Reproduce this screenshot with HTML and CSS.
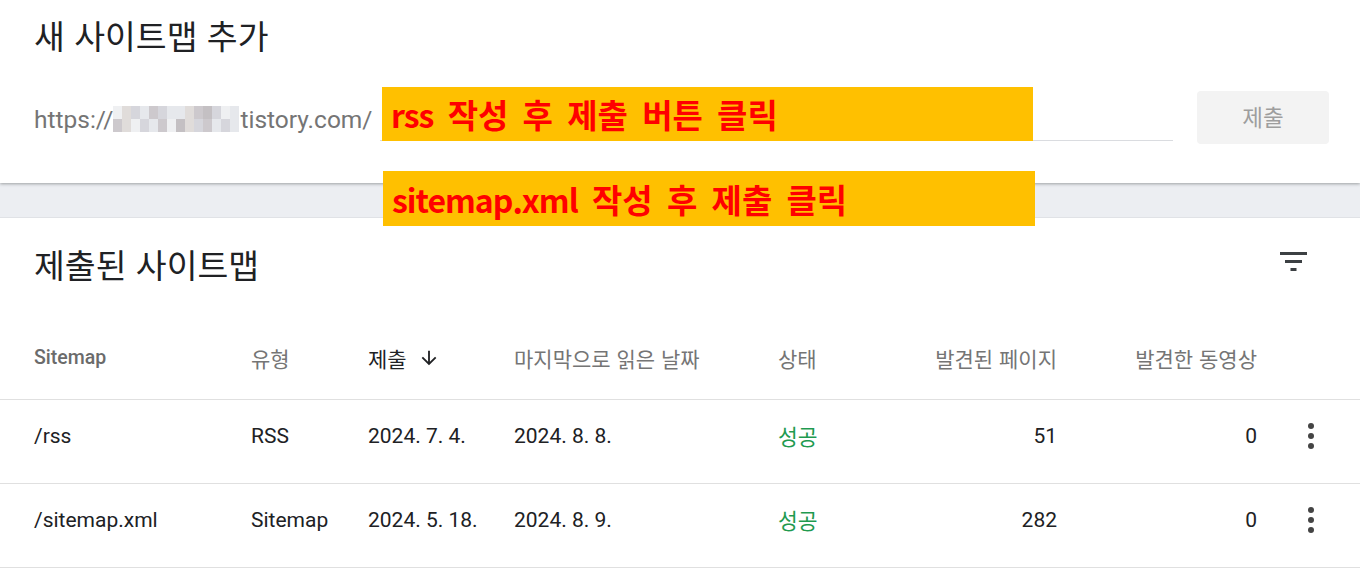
FILE: index.html
```html
<!DOCTYPE html>
<html lang="ko">
<head>
    <meta charset="UTF-8">
    <title>사이트맵</title>
    <link rel="stylesheet" href="styles.css">
</head>
<body>
<div class="page">
    <section class="card add-card">
        <h2 class="card-title">새 사이트맵 추가</h2>
        <div class="url-row">
            <span class="url-prefix">https://<span class="blur"><i></i><i></i><i></i><i></i><i></i><i></i><i></i><i></i><i></i><i></i><i></i><i></i><i></i><i></i><i></i><i></i><i></i><i></i><i></i><i></i><i></i><i></i><i></i><i></i><i></i><i></i><i></i><i></i></span>tistory.com/</span>
            <div class="url-input"></div>
            <button class="submit-btn">제출</button>
        </div>
    </section>

    <div class="band"></div>

    <section class="card list-card">
        <div class="list-head">
            <h2 class="card-title">제출된 사이트맵</h2>
            <svg class="filter-icon" width="28" height="20" viewBox="0 0 28 20">
                <rect x="0" y="0" width="27" height="3" fill="#3c4043"/>
                <rect x="5" y="8" width="17" height="3" fill="#3c4043"/>
                <rect x="10.5" y="16" width="6" height="3" fill="#3c4043"/>
            </svg>
        </div>

        <div class="table">
            <div class="row head">
                <span class="cell c-name">Sitemap</span>
                <span class="cell">유형</span>
                <span class="cell sorted">제출
                    <svg width="22" height="22" viewBox="0 0 24 24"><path d="M20 12l-1.41-1.41L13 16.17V4h-2v12.17l-5.58-5.59L4 12l8 8 8-8z" fill="#202124"/></svg>
                </span>
                <span class="cell">마지막으로 읽은 날짜</span>
                <span class="cell">상태</span>
                <span class="cell num">발견된 페이지</span>
                <span class="cell num">발견한 동영상</span>
                <span class="cell"></span>
            </div>
            <div class="row">
                <span class="cell">/rss</span>
                <span class="cell">RSS</span>
                <span class="cell">2024. 7. 4.</span>
                <span class="cell">2024. 8. 8.</span>
                <span class="cell ok">성공</span>
                <span class="cell num">51</span>
                <span class="cell num">0</span>
                <span class="cell more"><b></b><b></b><b></b></span>
            </div>
            <div class="row">
                <span class="cell">/sitemap.xml</span>
                <span class="cell">Sitemap</span>
                <span class="cell">2024. 5. 18.</span>
                <span class="cell">2024. 8. 9.</span>
                <span class="cell ok">성공</span>
                <span class="cell num">282</span>
                <span class="cell num">0</span>
                <span class="cell more"><b></b><b></b><b></b></span>
            </div>
        </div>
    </section>

    <div class="note note-rss"><span class="latin">rss</span> 작성 후 제출 버튼 클릭</div>
    <div class="note note-sitemap"><span class="latin">sitemap.xml</span> 작성 후 제출 클릭</div>
</div>
</body>
</html>
```

FILE: styles.css
```css
body {
    margin: 0;
    font-family: Roboto, "Noto Sans CJK KR", sans-serif;
    color: #202124;
    background: #fff;
}

.page {
    position: relative;
    min-height: 579px;
    overflow: hidden;
}

.card {
    background: #fff;
}

.add-card {
    height: 183px;
    box-sizing: border-box;
    padding: 14px 31px 0 34px;
    position: relative;
    z-index: 1;
    box-shadow: 0 1px 3px rgba(60, 64, 67, 0.45);
}

.card-title {
    margin: 0;
    font-family: "Noto Sans CJK KR", sans-serif;
    font-weight: 400;
    font-size: 33.5px;
    line-height: 42px;
    color: #202124;
}

.url-row {
    display: flex;
    align-items: center;
    margin-top: 35px;
    height: 53px;
}

.url-prefix {
    display: flex;
    align-items: center;
    font-size: 24.5px;
    color: #757575;
    margin-top: 3px;
}

.blur {
    display: grid;
    grid-template-columns: repeat(14, 9px);
    grid-template-rows: 13px 13px;
    margin: 0 1px 0 0;
}

.blur i { background: #e6e8ec; }
.blur i:nth-child(3n) { background: #d6d6dc; }
.blur i:nth-child(4n+1) { background: #eff0f2; }
.blur i:nth-child(5n) { background: #cdc9cd; }
.blur i:nth-child(7n+2) { background: #e0dcda; }
.blur i:nth-child(11n) { background: #c4c0c3; }

.url-input {
    flex: 1;
    align-self: flex-end;
    height: 4px;
    margin-left: 8px;
    margin-bottom: 3px;
    border-bottom: 1px solid #dadce0;
}

.submit-btn {
    width: 132px;
    height: 53px;
    margin-left: 24px;
    padding-bottom: 5px;
    border: 0;
    border-radius: 4px;
    background: #f3f3f3;
    color: #9e9e9e;
    font-family: "Noto Sans CJK KR", sans-serif;
    font-size: 22.5px;
}

.band {
    height: 35px;
    background: #eceef2;
    box-shadow: inset 0 -1px 0 #e0e2e6;
}

.list-card {
    padding-top: 25px;
}

.list-head {
    display: flex;
    align-items: center;
    justify-content: space-between;
    padding: 0 52px 0 34px;
}

.filter-icon {
    margin-top: -4px;
}

.table {
    margin-top: 31px;
}

.row {
    display: grid;
    grid-template-columns: 251px 117px 146px 264px 122px 157px 200px 1fr;
    align-items: center;
    height: 83px;
    box-sizing: content-box;
    border-bottom: 1px solid #e0e0e0;
    font-size: 21px;
}

.row:not(.head) {
    height: 71px;
    padding-bottom: 12px;
}

.row .cell:first-child {
    padding-left: 34px;
}

.row.head {
    font-family: "Noto Sans CJK KR", sans-serif;
    font-size: 21px;
    color: #757575;
}

.head .c-name {
    font-family: Roboto, sans-serif;
    font-size: 19.5px;
    font-weight: 500;
    color: #6b6b6b;
}

.sorted {
    display: flex;
    align-items: center;
    gap: 11px;
    color: #202124;
}

.num {
    text-align: right;
}

.ok {
    font-family: "Noto Sans CJK KR", sans-serif;
    font-size: 21.5px;
    color: #1f9a50;
}

.more {
    display: flex;
    flex-direction: column;
    align-items: center;
    gap: 4px;
    width: 10px;
    margin-left: 49px;
}

.more b {
    width: 6px;
    height: 6px;
    border-radius: 50%;
    background: #444;
}

.note {
    position: absolute;
    z-index: 2;
    box-sizing: border-box;
    padding-left: 9px;
    background: #ffc000;
    color: #ff0000;
    font-family: "Noto Sans CJK KR", sans-serif;
    font-weight: 700;
    font-size: 33px;
    word-spacing: 5px;
    display: flex;
    align-items: center;
    white-space: pre;
}

.latin {
    font-size: 32px;
    letter-spacing: -1px;
}

.note-rss {
    left: 382px;
    top: 87px;
    width: 651px;
    height: 54px;
}

.note-sitemap {
    left: 383px;
    top: 171px;
    width: 652px;
    height: 55px;
}
```
